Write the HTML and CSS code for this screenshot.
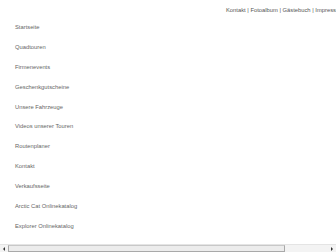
FILE: index.html
```html
<!DOCTYPE html>
<html lang="de">
<head>
<meta charset="utf-8">
<title>Quadtouren</title>
<link rel="stylesheet" href="styles.css">
</head>
<body>
<div class="viewport">
  <div class="page">
    <div class="topnav">
      <a href="#">Kontakt</a> | <a href="#">Fotoalbum</a> | <a href="#">Gästebuch</a> | <a href="#">Impressum</a>
    </div>
    <ul class="menu">
      <li><a href="#">Startseite</a></li>
      <li><a href="#">Quadtouren</a></li>
      <li><a href="#">Firmenevents</a></li>
      <li><a href="#">Geschenkgutscheine</a></li>
      <li><a href="#">Unsere Fahrzeuge</a></li>
      <li><a href="#">Videos unserer Touren</a></li>
      <li><a href="#">Routenplaner</a></li>
      <li><a href="#">Kontakt</a></li>
      <li><a href="#">Verkaufsseite</a></li>
      <li><a href="#">Arctic Cat Onlinekatalog</a></li>
      <li><a href="#">Explorer Onlinekatalog</a></li>
    </ul>
  </div>
  <div class="hscroll">
    <div class="arrow left"></div>
    <div class="track"><div class="thumb"></div></div>
    <div class="arrow right"></div>
  </div>
</div>
</body>
</html>
```
FILE: styles.css
```css
html, body {
  margin: 0;
  padding: 0;
  background: #fff;
  overflow: hidden;
}
body {
  font-family: "Liberation Sans", Arial, sans-serif;
  font-size: 5.8px;
  color: #666;
}
.viewport {
  width: 336px;
  height: 252px;
  display: flex;
  flex-direction: column;
  overflow: hidden;
}
.page {
  flex: 1;
  padding-top: 6px;
}
.topnav {
  margin-left: 226px;
  white-space: nowrap;
  line-height: 8px;
  color: #555;
}
.topnav a {
  color: #555;
  text-decoration: none;
}
.menu {
  list-style: none;
  margin: 9px 0 0 15px;
  padding: 0;
}
.menu li {
  height: 19.9px;
  line-height: 8px;
}
.menu a {
  color: #666;
  text-decoration: none;
}
.hscroll {
  height: 8px;
  display: flex;
  background: #f3f3f3;
  border-top: 1px solid #e4e4e4;
  box-sizing: border-box;
}
.arrow {
  width: 8px;
  display: flex;
  align-items: center;
  justify-content: center;
}
.arrow::before {
  content: "";
  width: 0;
  height: 0;
  border-top: 2px solid transparent;
  border-bottom: 2px solid transparent;
}
.arrow.left::before {
  border-right: 2px solid #333;
}
.arrow.right::before {
  border-left: 2px solid #333;
}
.track {
  flex: 1;
  display: flex;
}
.thumb {
  width: 277px;
  background: #ececec;
  border: 1px solid #a9a9a9;
  border-top-color: #c8c8c8;
  box-sizing: border-box;
}
```
